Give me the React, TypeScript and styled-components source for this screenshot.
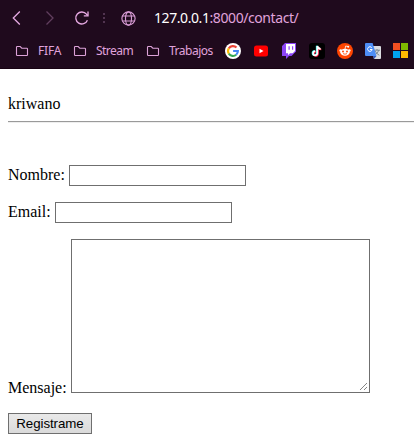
import React from "react";
import styled, { createGlobalStyle } from "styled-components";

const GlobalStyle = createGlobalStyle`
  * { box-sizing: border-box; }
  html, body { margin: 0; background: #fff; overflow: hidden; }
  svg { display: block; flex: none; }
`;

const Window = styled.div`
  width: 414px;
  height: 448px;
  overflow: hidden;
  background: #fff;
`;

const Chrome = styled.header`
  height: 69px;
  background: #1f0a1d;
  border-bottom: 1px solid #180313;
  font-family: "Noto Sans", "Open Sans", sans-serif;
  color: #e0a3dc;
`;

const NavBar = styled.nav`
  display: flex;
  align-items: center;
  height: 36px;
  padding-left: 8px;
`;

const NavIcon = styled.span<{ $gap?: number; $dim?: boolean }>`
  display: flex;
  margin-right: ${(p) => p.$gap ?? 0}px;
  opacity: ${(p) => (p.$dim ? 0.33 : 1)};
`;

const Address = styled.div`
  font-size: 14px;
  line-height: 20px;
  letter-spacing: -0.42px;
  white-space: nowrap;
`;

const Host = styled.span`
  color: #fff;
`;

const BookmarkBar = styled.div`
  display: flex;
  align-items: center;
  height: 30px;
  padding-left: 15px;
`;

const Folder = styled.div<{ $width: number }>`
  display: flex;
  align-items: center;
  gap: 9px;
  flex: none;
  width: ${(p) => p.$width}px;
`;

const FolderName = styled.span<{ $spacing: number }>`
  font-size: 12px;
  line-height: 16px;
  letter-spacing: ${(p) => p.$spacing}px;
`;

const Favicons = styled.div`
  display: flex;
  gap: 12px;
`;

const Page = styled.main`
  padding: 26px 0 0 8px;
  font-family: "Liberation Serif", "Times New Roman", serif;
  font-size: 16px;
  line-height: 18px;
  color: #000;
`;

const Rule = styled.hr`
  height: 2px;
  margin: 8px 0 42px;
  border: 0;
  border-top: 1px solid #9a9a9a;
  border-bottom: 1px solid #eee;
`;

const Field = styled.label<{ $align?: string }>`
  display: flex;
  align-items: ${(p) => p.$align ?? "flex-start"};
  gap: 4px;
  margin-bottom: 16px;
`;

const FieldLabel = styled.span`
  padding-top: 1px;
`;

const MessageLabel = styled.span`
  margin-bottom: -4px;
`;

const TextInput = styled.input`
  width: 177px;
  height: 21px;
  padding: 1px 2px;
  border: 1px solid #6f6f6f;
  border-radius: 0;
  background: #fff;
  outline: none;
`;

const MessageBox = styled.div`
  display: flex;
  align-items: flex-end;
  justify-content: flex-end;
  width: 299px;
  height: 154px;
  padding: 1px;
  border: 1px solid #6f6f6f;
`;

const MessageInput = styled.textarea`
  flex: 1;
  align-self: stretch;
  min-width: 0;
  padding: 1px;
  border: 0;
  resize: none;
  outline: none;
`;

const Submit = styled.button`
  display: block;
  width: 84px;
  height: 21px;
  margin-top: 20px;
  padding: 0;
  border: 1px solid #6f6f6f;
  border-radius: 0;
  background: linear-gradient(#e9e9e9, #dadada);
  font: 13.333px/17px "Liberation Sans", Arial, sans-serif;
  letter-spacing: -0.08px;
  color: #000;
`;

const Chevron = ({ flip = false }: { flip?: boolean }) => (
  <svg width="18" height="18" viewBox="0 0 18 18" fill="none" stroke="#e6a9e2" strokeWidth="1.3">
    <path d={flip ? "M5.5 2.5 12 9l-6.5 6.5" : "M11.8 2.5 5.3 9l6.5 6.5"} />
  </svg>
);

const Reload = () => (
  <svg width="18" height="18" viewBox="0 0 18 18" fill="none" stroke="#e6a9e2" strokeWidth="1.35">
    <path d="M14.4 11.2A6 6 0 1 1 13.5 5.2L14.8 6.5" />
    <path d="M15 2.6v4.2h-4.2" />
  </svg>
);

const Dots = () => (
  <svg width="4" height="12" viewBox="0 0 4 12" fill="#513450">
    <path d="M1 1h2v2H1zM1 5h2v2H1zM1 9h2v2H1z" />
  </svg>
);

const Globe = () => (
  <svg width="15" height="15" viewBox="0 0 15 15" fill="none" stroke="#d79bd4" strokeWidth="1.15">
    <circle cx="7.5" cy="7.5" r="6.6" />
    <ellipse cx="7.5" cy="7.5" rx="3" ry="6.6" />
    <path d="M1.4 5h12.2M1.4 10h12.2" />
  </svg>
);

const FolderIcon = () => (
  <svg width="14" height="12" viewBox="0 0 14 12" fill="none" stroke="#dca2d8" strokeWidth="1.1">
    <path d="M1.5 2.2q0-.7.7-.7h3l1.6 1.7h5q.7 0 .7.7v5.8q0 .8-.7.8H2.2q-.7 0-.7-.8z" />
  </svg>
);

const Google = () => (
  <svg width="16" height="16" viewBox="0 0 16 16" fill="none" strokeWidth="2.1">
    <circle cx="8" cy="8" r="8" fill="#fff" />
    <path d="M3.8 5.4A4.9 4.9 0 0 1 11.5 4.6" stroke="#ea4335" />
    <path d="M3.8 5.4A4.9 4.9 0 0 0 3.8 10.6" stroke="#fbbc05" />
    <path d="M3.8 10.6A4.9 4.9 0 0 0 11.2 11.7" stroke="#34a853" />
    <path d="M11.2 11.7A4.9 4.9 0 0 0 12.9 8H8.1" stroke="#4285f4" />
  </svg>
);

const YouTube = () => (
  <svg width="16" height="16" viewBox="0 0 16 16">
    <rect x="1" y="2.5" width="14" height="11" rx="2.5" fill="#f00" />
    <path d="m6.5 5.8 4 2.2-4 2.2z" fill="#fff" />
  </svg>
);

const Twitch = () => (
  <svg width="16" height="16" viewBox="0 0 16 16">
    <path d="M4 0h11v8.4L10.5 13H8l-3 3v-3H1V3z" fill="#8b45f6" />
    <path d="M5 1h9v7l-2.3 2.3H9l-2 2v-2H5z" fill="#fff" />
    <path d="M7.5 3.2h1.2v3.6H7.5zM11 3.2h1.2v3.6H11z" fill="#8b45f6" />
  </svg>
);

const NOTE = "M8.3 3v7.2a2.1 2.1 0 1 1-2.1-2.1M8.3 3q.5 2.7 3.3 2.9";

const TikTok = () => (
  <svg width="16" height="16" viewBox="0 0 16 16" fill="none" strokeWidth="1.7">
    <rect width="16" height="16" rx="3" fill="#000" />
    <path d={NOTE} stroke="#25f4ee" transform="translate(-.6 -.3)" />
    <path d={NOTE} stroke="#fe2c55" transform="translate(.7 .6)" />
    <path d={NOTE} stroke="#fff" />
  </svg>
);

const Reddit = () => (
  <svg width="16" height="16" viewBox="0 0 16 16">
    <circle cx="8" cy="8" r="8" fill="#ff4500" />
    <path d="m8 6 .7-3 2.3.5" fill="none" stroke="#fff" strokeWidth=".8" />
    <g fill="#fff">
      <circle cx="11.2" cy="3.7" r="1" />
      <circle cx="3.7" cy="7.5" r="1.3" />
      <circle cx="12.3" cy="7.5" r="1.3" />
      <ellipse cx="8" cy="9.2" rx="4.7" ry="3.5" />
    </g>
    <g fill="#ff4500">
      <circle cx="6" cy="8.5" r=".95" />
      <circle cx="10" cy="8.5" r=".95" />
    </g>
    <path d="M6 10.6q2 1.2 4 0" fill="none" stroke="#ff4500" strokeWidth=".8" />
  </svg>
);

const Translate = () => (
  <svg width="16" height="16" viewBox="0 0 16 16" fill="none">
    <path d="M6 3h9q1 0 1 1v11q0 1-1 1H9z" fill="#dadce0" />
    <path d="M9 7.2h6M12 6v1.2M13.7 7.2q-.6 3-4 4.8M10.3 8q1 2.7 4 4.3" stroke="#71828c" strokeWidth=".9" />
    <path d="M1 0h6.6L11.5 13H1q-1 0-1-1V1q0-1 1-1z" fill="#4d8df5" />
    <path d="m8 13h3.5L9 16z" fill="#3157b8" />
    <path d="M6.8 4.7A2.3 2.3 0 1 0 7.2 6.5H5" stroke="#fff" strokeWidth="1" />
  </svg>
);

const Microsoft = () => (
  <svg width="16" height="16" viewBox="0 0 16 16">
    <path d="M0 0h7v7H0z" fill="#f25022" />
    <path d="M8 0h7v7H8z" fill="#7fba00" />
    <path d="M0 8h7v7H0z" fill="#00a4ef" />
    <path d="M8 8h7v7H8z" fill="#ffb900" />
  </svg>
);

const Grip = () => (
  <svg width="9" height="9" viewBox="0 0 9 9" stroke="#555" strokeWidth="1" strokeDasharray="1 .414">
    <path d="M1 8 8 1M5 8l3-3" />
  </svg>
);

const folders = [
  { name: "FIFA", width: 58, spacing: -0.2 },
  { name: "Stream", width: 73, spacing: -0.55 },
  { name: "Trabajos", width: 79, spacing: -0.5 },
];

export default function App() {
  return (
    <Window>
      <GlobalStyle />
      <Chrome>
        <NavBar>
          <NavIcon $gap={15}><Chevron /></NavIcon>
          <NavIcon $gap={14} $dim><Chevron flip /></NavIcon>
          <NavIcon $gap={11}><Reload /></NavIcon>
          <NavIcon $gap={15}><Dots /></NavIcon>
          <NavIcon $gap={18}><Globe /></NavIcon>
          <Address><Host>127.0.0.1</Host>:8000/contact/</Address>
        </NavBar>
        <BookmarkBar>
          {folders.map((f) => (
            <Folder key={f.name} $width={f.width}>
              <FolderIcon />
              <FolderName $spacing={f.spacing}>{f.name}</FolderName>
            </Folder>
          ))}
          <Favicons>
            <Google />
            <YouTube />
            <Twitch />
            <TikTok />
            <Reddit />
            <Translate />
            <Microsoft />
          </Favicons>
        </BookmarkBar>
      </Chrome>
      <Page>
        <div>kriwano</div>
        <Rule />
        <Field><FieldLabel>Nombre:</FieldLabel><TextInput /></Field>
        <Field><FieldLabel>Email:</FieldLabel><TextInput /></Field>
        <Field $align="flex-end">
          <MessageLabel>Mensaje:</MessageLabel>
          <MessageBox><MessageInput /><Grip /></MessageBox>
        </Field>
        <Submit>Registrame</Submit>
      </Page>
    </Window>
  );
}
